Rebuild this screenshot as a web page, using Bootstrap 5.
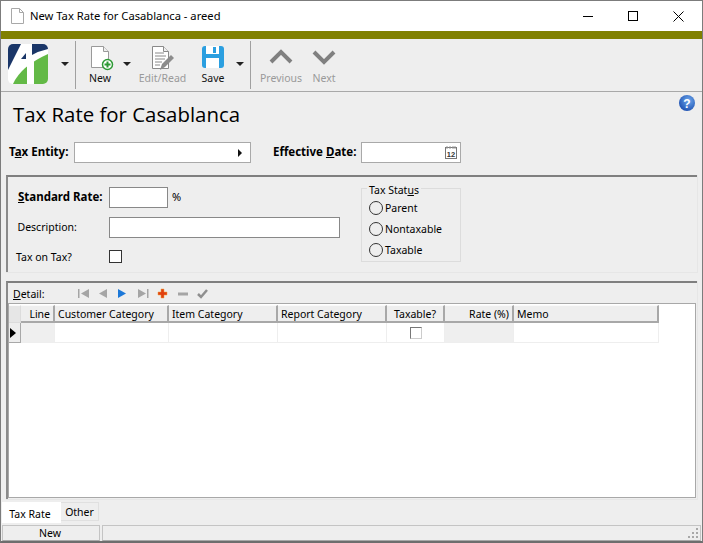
<!DOCTYPE html>
<html lang="en">
<head>
<meta charset="utf-8">
<title>New Tax Rate for Casablanca</title>
<link href="https://cdn.jsdelivr.net/npm/bootstrap@5.3.0/dist/css/bootstrap.min.css" rel="stylesheet">
<style>
html,body{height:100%;overflow:hidden}
body{background:#eee;color:#000;font-family:"Noto Sans","Open Sans",sans-serif;font-size:10.5px;line-height:14px}
.win{width:703px;height:543px;border:1px solid #7c7c7c;border-bottom:2px solid #6e6e6e;background:#eee;display:flex;flex-direction:column}
.tbar{height:30px;background:#fff;flex:none;font-size:11.2px;padding-left:10px;gap:6px}
.ctrls{margin-left:auto;margin-right:18px;gap:35px}
.olive{height:8px;background:#808000;flex:none}
.tool{height:53px;flex:none;border-bottom:1px solid #a8a8a8;padding-left:7px}
.logo{width:40px;height:40px;margin-top:5px}
.caret{width:0;height:0;border-left:4px solid transparent;border-right:4px solid transparent;border-top:4px solid #222;margin-top:23px}
.vsep{width:1px;height:48px;background:#a0a0a0;margin-top:2px;margin-left:6px}
.tbtn{display:flex;flex-direction:column;align-items:center;text-align:center;padding-top:7px;font-size:10.5px;color:#111}
.tbtn svg{display:block;height:25px}
.off{color:#9a9a9a}
.c1{margin-left:13px}.c2{margin-left:8px}
.b-new{width:30px;margin-left:9px}
.b-new svg{margin-left:3px}
.b-edit{width:49px;margin-left:7px}
.b-save{width:30px;margin-left:11px}
.b-prev{width:42px;margin-left:9px}
.b-next{width:24px;margin-left:10px}
.heading{height:50px;flex:none;padding-left:12px;padding-right:7px;font-family:"Open Sans","Noto Sans",sans-serif;font-size:20.4px;padding-top:8px;line-height:28px}
.heading svg{margin-top:-5px}
.entity{height:25px;flex:none;padding-left:8px}
.lbl-b{font-weight:700;font-size:11.5px}
.ent-l{width:61px;line-height:20px;white-space:nowrap}
.date-l{margin-left:22px;width:83px;line-height:20px;white-space:nowrap}
.fbox{background:#fff;border:1px solid #a9a9a9;height:21px;display:block}
.dark{border-color:#888}
.w-ent{width:177px;margin-left:4px}
.w-date{width:100px;margin-left:5px;padding-right:3px}
.ent-arrow{width:0;height:0;border-top:4px solid transparent;border-bottom:4px solid transparent;border-left:4px solid #111}
.panel-a{margin:8px 4px 0 5px;height:98px;border-right:1px solid #e6e6e6;border-bottom:1px solid #e6e6e6;flex:none}
.topline{border-top:2px solid #7f7f7f;border-left:2px solid #8a8a8a;height:100%}
.col-left{width:345px;padding-top:10px}
.frow{display:flex;align-items:center;height:21px;margin-top:9px}
.frow:first-child{margin-top:0}
.frow:last-child{margin-top:8px}
.flab{width:101px;padding-left:10px;padding-bottom:2px;flex:none;white-space:nowrap}
.flab-d{padding-left:9.5px}.flab-t{padding-left:8px;padding-bottom:0}
.pct{margin-left:4px;font-size:11px;padding-bottom:2px}
.w-std{width:59px}
.w-desc{width:231px}
.cbx{width:13px;height:13px;border:1px solid #333;background:#fff;display:block}
.statusbox{border:1px solid #dcdcdc;width:100px;height:74px;margin-top:11px;margin-left:8px;position:relative;padding:8px 0 0 7px}
.sblegend{position:absolute;top:-6px;left:5px;padding:0 2px;background:#eee;line-height:14px}
.radio-row{display:flex;align-items:center;height:21px;gap:2px;white-space:nowrap}
.rad{width:14px;height:14px;border-radius:50%;border:1px solid #333;background:#eee;display:block;flex:none}
.panel-b{margin:8px 4px 0 5px;height:219px;border-right:1px solid #e6e6e6;border-bottom:1px solid #e6e6e6;flex:none}
.panel-b-in{border-top:2px solid #7f7f7f;border-left:2px solid #8a8a8a;height:100%;display:flex;flex-direction:column}
.dtool{height:20px;flex:none;padding-left:5px;padding-top:4px}
.dlabel{width:0;white-space:nowrap}
.dicons{margin-left:65px;margin-top:1px}
.gridwrap{flex:1;background:#fff;border:1px solid #a8a8a8;margin-right:1px;margin-bottom:1px;padding-top:1px;overflow:hidden}
.tgrid{display:grid;grid-template-columns:12px 34px 114px 109px 109px 58px 69px 145px;width:650px}
.th{height:18px;background:#eee;border-right:2px solid #a8a8a8;border-bottom:2px solid #a8a8a8;border-top:1px solid #fafafa;line-height:17px;padding:0 3px;white-space:nowrap;overflow:hidden}
.th.rt{text-align:right}.th.ctr{text-align:center}
.th.corner{border-right:1px solid #dcdcdc;border-bottom:1px solid #dcdcdc;background:#e6e6e6}
.td{height:20px;border-right:1px solid #eee;border-bottom:1px solid #eee;background:#fff;display:flex;align-items:center;justify-content:center}
.td.ro{background:#efefef}
.td.rowh{background:#eee;border-right:1px solid #a8a8a8;border-bottom:1px solid #a8a8a8;justify-content:flex-start;padding-left:1px}
.pt{width:0;height:0;border-top:5px solid transparent;border-bottom:5px solid transparent;border-left:6px solid #000}
.gcbx{width:12px;height:12px;border:1px solid #777;border-right-color:#ccc;border-bottom-color:#ccc;display:block}
.tabs{height:23px;flex:none;padding-left:1px;margin-top:2px}
.tab1{width:59px;height:21px;background:#fff;text-align:center;line-height:22px;padding:1px 3px 0 0}
.tab2{width:38px;height:19px;border:1px solid #e0e0e0;border-left:0;text-align:center;line-height:18px}
.sbar{height:16px;flex:none;padding:0 1px 0 1px;gap:2px}
.sp{height:16px;border:1px solid #c4c4c4;border-bottom-color:#a8a8a8;line-height:15px;text-align:center}
.sp1{width:98px;padding-right:2px}.sp2{flex:1;position:relative}
.grip{position:absolute;right:1px;bottom:1px}
</style>
</head>
<body>
<div class="win">
  <div class="tbar d-flex align-items-center">
    <svg width="13" height="16" viewBox="0 0 13 16"><path d="M.5.5h8l4 4v11H.5z" fill="#fff" stroke="#a8a8a8"/><path d="M8.500.5v4h4" fill="none" stroke="#a8a8a8"/></svg>
    <span>New Tax Rate for Casablanca - areed</span>
    <div class="ctrls d-flex align-items-center">
      <svg width="10" height="10" viewBox="0 0 10 10"><path d="M0 5.500h10" stroke="#000"/></svg>
      <svg width="10" height="10" viewBox="0 0 10 10"><rect x=".5" y=".5" width="9" height="9" fill="none" stroke="#000"/></svg>
      <svg width="11" height="11" viewBox="0 0 11 11"><path d="M.5.5l10 10M10.500.5l-10 10" stroke="#000" fill="none"/></svg>
    </div>
  </div>
  <div class="olive"></div>
  <div class="tool d-flex">
    <svg class="logo" viewBox="0 0 40 40"><defs><clipPath id="rr"><rect width="40" height="40" rx="5"/></clipPath></defs><g clip-path="url(#rr)"><rect width="40" height="40" fill="#fff"/><path d="M0 0H13L0 26z" fill="#1a3668"/><path d="M24 0H40V5Q31 7 24 11z" fill="#1a3668"/><path d="M13 15L18 9V15z" fill="#1a3668"/><path d="M5 40Q13 22 40 10V40z" fill="#63b946"/><path d="M19 16H26V40H19z" fill="#fff"/></g></svg>
    <span class="caret c1"></span>
    <span class="vsep"></span>
    <div class="tbtn b-new">
      <svg width="24" height="25" viewBox="0 0 24 25"><path d="M1.500.5h12l5 5v16h-17z" fill="#fff" stroke="#9a9a9a"/><path d="M13.500.5v5h5" fill="#eee" stroke="#9a9a9a"/><circle cx="17.500" cy="18.500" r="5" fill="#fff" stroke="#2d9a35" stroke-width="1.500"/><path d="M17.500 15.500v6M14.500 18.500h6" stroke="#2d9a35" stroke-width="2"/></svg>
      <span>New</span>
    </div>
    <span class="caret c2"></span>
    <div class="tbtn off b-edit">
      <svg width="24" height="25" viewBox="0 0 24 25"><path d="M1.500.5h11l5 5v17h-16z" fill="#fff" stroke="#8a8a8a"/><path d="M12.500.5v5h5" fill="#eee" stroke="#8a8a8a"/><path d="M4 7h9M4 10h11M4 13h10M4 16h7M4 19h5" stroke="#8a8a8a"/><path d="M9 24l2-6 9-9 3 3-9 9z" fill="#8c8c8c"/></svg>
      <span>Edit/Read</span>
    </div>
    <div class="tbtn b-save">
      <svg width="24" height="25" viewBox="0 0 24 25"><rect x="1" y="0" width="22" height="22" rx="3" fill="#2b9fe0"/><rect x="5" y="0" width="13" height="8" fill="#fff"/><rect x="12" y="1" width="3" height="6" fill="#2b9fe0"/><rect x="5" y="12" width="13" height="10" fill="#fff"/></svg>
      <span>Save</span>
    </div>
    <span class="caret c2"></span>
    <span class="vsep"></span>
    <div class="tbtn off b-prev">
      <svg width="24" height="25" viewBox="0 0 24 25"><path d="M2 16L12 6l10 10" fill="none" stroke="#808080" stroke-width="4"/></svg>
      <span>Previous</span>
    </div>
    <div class="tbtn off b-next">
      <svg width="24" height="25" viewBox="0 0 24 25"><path d="M2 6l10 10L22 6" fill="none" stroke="#808080" stroke-width="4"/></svg>
      <span>Next</span>
    </div>
  </div>
  <div class="heading d-flex justify-content-between align-items-start">
    <span>Tax Rate for Casablanca</span>
    <svg width="16" height="16" viewBox="0 0 16 16"><defs><radialGradient id="hg" cx=".6" cy=".35" r=".7"><stop offset="0" stop-color="#6ea8ec"/><stop offset="1" stop-color="#1c4fb0"/></radialGradient></defs><circle cx="8" cy="8" r="8" fill="url(#hg)"/><text x="8" y="12.500" text-anchor="middle" font-family="Liberation Sans" font-weight="700" font-size="12" fill="#fff">?</text></svg>
  </div>
  <div class="entity d-flex align-items-start">
    <span class="lbl-b ent-l">T<u>a</u>x Entity:</span>
    <span class="fbox w-ent d-flex align-items-center justify-content-end pe-2"><span class="ent-arrow"></span></span>
    <span class="lbl-b date-l">Effective <u>D</u>ate:</span>
    <span class="fbox w-date d-flex align-items-center justify-content-end">
      <svg width="12" height="13" viewBox="0 0 12 13"><rect x=".5" y="1.500" width="11" height="11" fill="#fff" stroke="#777"/><path d="M2 0v3M5 0v3M8 0v3M10 0v3" stroke="#999"/><text x="6" y="10.500" text-anchor="middle" font-family="Liberation Sans" font-weight="700" font-size="7.500" fill="#333">12</text></svg>
    </span>
  </div>
  <div class="panel-a">
    <div class="topline d-flex">
      <div class="col-left">
        <div class="frow"><span class="flab lbl-b"><u>S</u>tandard Rate:</span><span class="fbox w-std dark"></span><span class="pct">%</span></div>
        <div class="frow"><span class="flab flab-d">Description:</span><span class="fbox w-desc dark"></span></div>
        <div class="frow"><span class="flab flab-t">Tax on Tax?</span><span class="cbx"></span></div>
      </div>
      <div class="statusbox">
        <span class="sblegend">Tax Stat<u>u</u>s</span>
        <div class="radio-row"><span class="rad"></span>Parent</div>
        <div class="radio-row"><span class="rad"></span>Nontaxable</div>
        <div class="radio-row"><span class="rad"></span>Taxable</div>
      </div>
    </div>
  </div>
  <div class="panel-b">
    <div class="panel-b-in">
      <div class="dtool d-flex align-items-start">
        <span class="dlabel"><u>D</u>etail:</span>
        <svg class="dicons" width="140" height="12" viewBox="0 0 140 12"><g fill="#a5a5a5"><path d="M0 1h1.500v9H0zM11 1v9L3 5.500z"/><path d="M29 1v9l-8-4.500z"/></g><path d="M40 1l8 4.500L40 10z" fill="#1c78d8"/><g fill="#a5a5a5"><path d="M60 1l8 4.500L60 10zM69 1h1.500v9H69z"/></g><path d="M80 4h3V1h3v3h3v3h-3v3h-3V7h-3z" fill="#e04010" stroke="#f2a13c" stroke-width=".5"/><path d="M100 4.500h10v3h-10z" fill="#a5a5a5"/><path d="M120 6l3 3 6-7" fill="none" stroke="#8f8f8f" stroke-width="2.500"/></svg>
      </div>
      <div class="gridwrap">
        <div class="tgrid">
          <div class="th corner"></div>
          <div class="th rt">Line</div>
          <div class="th">Customer Category</div>
          <div class="th">Item Category</div>
          <div class="th">Report Category</div>
          <div class="th ctr">Taxable?</div>
          <div class="th rt">Rate (%)</div>
          <div class="th">Memo</div>
          <div class="td rowh"><span class="pt"></span></div>
          <div class="td ro"></div>
          <div class="td"></div>
          <div class="td"></div>
          <div class="td"></div>
          <div class="td"><span class="gcbx"></span></div>
          <div class="td ro"></div>
          <div class="td"></div>
        </div>
      </div>
    </div>
  </div>
  <div class="tabs d-flex align-items-start">
    <div class="tab1">Tax Rate</div>
    <div class="tab2">Other</div>
  </div>
  <div class="sbar d-flex">
    <div class="sp sp1">New</div>
    <div class="sp sp2">
      <svg class="grip" width="11" height="11" viewBox="0 0 11 11"><g fill="#a8a8a8"><rect x="8" y="0" width="2" height="2"/><rect x="4" y="4" width="2" height="2"/><rect x="8" y="4" width="2" height="2"/><rect x="0" y="8" width="2" height="2"/><rect x="4" y="8" width="2" height="2"/><rect x="8" y="8" width="2" height="2"/></g></svg>
    </div>
  </div>
</div>
<script src="https://cdn.jsdelivr.net/npm/bootstrap@5.3.0/dist/js/bootstrap.bundle.min.js"></script>
</body>
</html>
